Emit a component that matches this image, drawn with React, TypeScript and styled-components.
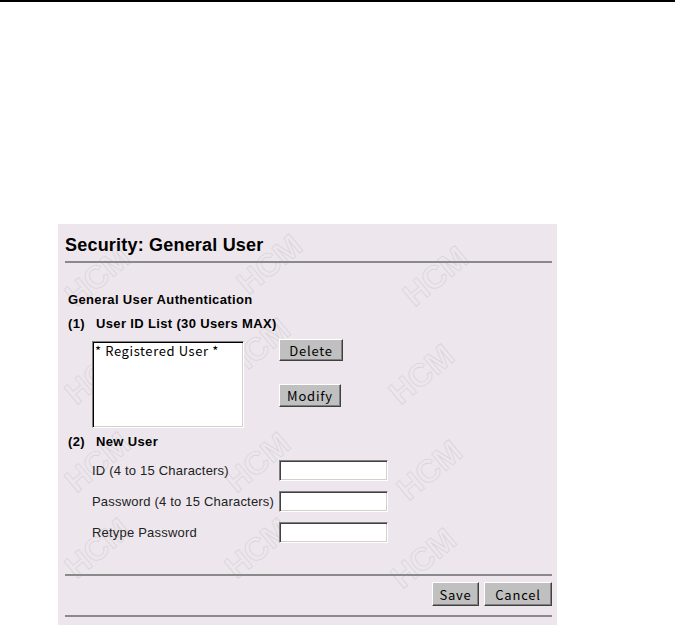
import { Fragment } from 'react'
import styled, { createGlobalStyle } from 'styled-components'

const GlobalStyle = createGlobalStyle`
  html, body {
    margin: 0;
    padding: 0;
    background: #ffffff;
    font-family: "Liberation Sans", Arial, sans-serif;
  }
`

const TopRule = styled.div`
  height: 2px;
  background: #000000;
`

const Panel = styled.div`
  position: relative;
  overflow: hidden;
  width: 487px;
  margin: 222px 0 0 58px;
  padding: 11px 5px 20px 7px;
  background: #ede7ed;
`

const Watermark = styled.span<{ $x: number; $y: number }>`
  position: absolute;
  left: ${({ $x }) => $x - 37}px;
  top: ${({ $y }) => $y - 16}px;
  font: bold 32px/32px "Liberation Sans", Arial, sans-serif;
  white-space: nowrap;
  color: transparent;
  -webkit-text-stroke: 0.8px #dad4da;
  transform: rotate(-40deg);
  pointer-events: none;
  user-select: none;
`

const Title = styled.h1`
  position: relative;
  margin: 0 0 6px;
  font-size: 18px;
  line-height: 20px;
  font-weight: bold;
  letter-spacing: 0.2px;
  color: #000;
`

const Divider = styled.div<{ $gap?: number }>`
  position: relative;
  height: 2px;
  margin-top: ${({ $gap }) => $gap ?? 0}px;
  background: #8a8a8a;
`

const Body = styled.div`
  position: relative;
  padding: 29px 0 0 3px;
`

const SectionTitle = styled.div<{ $gap?: number }>`
  display: flex;
  margin-top: ${({ $gap }) => $gap ?? 0}px;
  font-size: 13px;
  line-height: 16px;
  font-weight: bold;
  letter-spacing: 0.35px;
  color: #000;
`

const StepNo = styled.span`
  width: 28px;
  flex: none;
`

const ListRow = styled.div`
  display: flex;
  align-items: flex-start;
  gap: 35px;
  margin: 9px 0 0 24px;
`

const ListBox = styled.div`
  box-sizing: border-box;
  width: 152px;
  height: 87px;
  padding: 1px 2px;
  background: #ffffff;
  border: 1px solid;
  border-color: #808080 #ffffff #ffffff #808080;
  box-shadow: inset 1px 1px 0 #000000, inset -1px -1px 0 #d4d0c8;
  font: 13px "Noto Sans CJK JP", sans-serif;
  line-height: 16px;
  letter-spacing: 0.6px;
  color: #000;
`

const ButtonColumn = styled.div`
  display: flex;
  flex-direction: column;
  gap: 23px;
  margin-top: -2px;
`

const Button = styled.button<{ $w: number; $h: number }>`
  box-sizing: border-box;
  width: ${({ $w }) => $w}px;
  height: ${({ $h }) => $h}px;
  padding: 0;
  background: #c0c0c0;
  border: 1px solid;
  border-color: #ffffff #404040 #404040 #ffffff;
  box-shadow: inset -1px -1px 0 #808080;
  font: 13px "Noto Sans CJK JP", sans-serif;
  letter-spacing: 0.8px;
  color: #000;
  text-align: center;
  cursor: pointer;
`

const FieldGrid = styled.div`
  display: grid;
  grid-template-columns: 187px 109px;
  row-gap: 10px;
  align-items: center;
  margin: 10px 0 0 24px;
`

const FieldLabel = styled.label`
  font-size: 13px;
  letter-spacing: 0.2px;
  color: #222;
`

const TextInput = styled.input`
  box-sizing: border-box;
  width: 109px;
  height: 21px;
  margin: 0;
  padding: 1px 3px;
  background: #ffffff;
  border: 1px solid;
  border-color: #808080 #ffffff #ffffff #808080;
  box-shadow: inset 1px 1px 0 #404040, inset -1px -1px 0 #d4d0c8;
  font: 13px "Liberation Sans", sans-serif;
  outline: none;
`

const Actions = styled.div`
  position: relative;
  display: flex;
  justify-content: flex-end;
  gap: 5px;
  padding: 6px 0 9px;
`

const marks: [number, number][] = [
  [40, 52], [212, 40], [378, 52],
  [40, 150], [200, 124], [364, 150],
  [40, 238], [200, 238], [372, 246],
  [40, 324], [200, 324], [366, 334],
]

const fields = [
  { id: 'uid', label: 'ID (4 to 15 Characters)', type: 'text' },
  { id: 'pw', label: 'Password (4 to 15 Characters)', type: 'password' },
  { id: 'pw2', label: 'Retype Password', type: 'password' },
]

export default function App() {
  return (
    <>
      <GlobalStyle />
      <TopRule />
      <Panel>
        {marks.map(([x, y], i) => (
          <Watermark key={i} $x={x} $y={y} aria-hidden="true">
            HCM
          </Watermark>
        ))}
        <Title>Security: General User</Title>
        <Divider />
        <Body>
          <SectionTitle>General User Authentication</SectionTitle>
          <SectionTitle $gap={8}>
            <StepNo>(1)</StepNo>User ID List (30 Users MAX)
          </SectionTitle>
          <ListRow>
            <ListBox>* Registered User *</ListBox>
            <ButtonColumn>
              <Button $w={64} $h={22}>Delete</Button>
              <Button $w={62} $h={23}>Modify</Button>
            </ButtonColumn>
          </ListRow>
          <SectionTitle $gap={6}>
            <StepNo>(2)</StepNo>New User
          </SectionTitle>
          <FieldGrid>
            {fields.map((f) => (
              <Fragment key={f.id}>
                <FieldLabel htmlFor={f.id}>{f.label}</FieldLabel>
                <TextInput id={f.id} type={f.type} />
              </Fragment>
            ))}
          </FieldGrid>
        </Body>
        <Divider $gap={31} />
        <Actions>
          <Button $w={47} $h={24}>Save</Button>
          <Button $w={68} $h={24}>Cancel</Button>
        </Actions>
        <Divider />
      </Panel>
    </>
  )
}
